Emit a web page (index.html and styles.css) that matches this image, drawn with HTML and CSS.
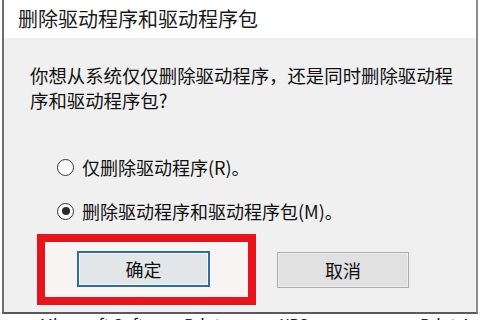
FILE: index.html
```html
<!DOCTYPE html>
<html lang="zh-CN">
<head>
    <meta charset="UTF-8" />
    <meta name="viewport" content="width=device-width, initial-scale=1.0" />
    <title>删除驱动程序和驱动程序包</title>
    <link rel="stylesheet" href="styles.css">
</head>
<body>
    <!-- Dialog -->
    <div class="dialog">
        <div class="dialog-title">删除驱动程序和驱动程序包</div>

        <div class="dialog-body">
            <p class="question">你想从系统仅仅删除驱动程序，还是同时删除驱动程序和驱动程序包?</p>

            <div class="options">
                <label class="option">
                    <span class="radio"></span>
                    <span>仅删除驱动程序(R)。</span>
                </label>
                <label class="option">
                    <span class="radio checked"></span>
                    <span>删除驱动程序和驱动程序包(M)。</span>
                </label>
            </div>

            <div class="buttons">
                <div class="highlight">
                    <button class="btn btn-default">确定</button>
                </div>
                <button class="btn">取消</button>
            </div>
        </div>
    </div>

    <!-- Window behind the dialog -->
    <div class="behind">
        <span class="col-name">Microsoft Software Printer Driver</span>
        <span class="col-type">XPS</span>
        <span class="col-env">Print 4</span>
    </div>
</body>
</html>
```

FILE: styles.css
```css
/* Base */
body {
    margin: 0;
    padding: 0;
    background: #fff;
    font-family: "Noto Sans CJK SC", "Noto Sans", sans-serif;
    color: #111;
    width: 480px;
    height: 320px;
    overflow: hidden;
}

/* Dialog frame */
.dialog {
    margin-left: 2px;
    width: 472px;
    border-left: 2px solid #6f6f6f;
    border-right: 2px solid #8c8c8c;
    border-bottom: 2px solid #5a5a5a;
    background: #f0f0f0;
}

.dialog-title {
    height: 38px;
    line-height: 38px;
    padding-left: 14px;
    background: #fff;
    font-size: 20px;
    color: #1a1a1a;
}

.dialog-body {
    padding: 25px 0 7px 26px;
    font-size: 18px;
}

.question {
    margin: 0;
    font-size: 18.4px;
    line-height: 25px;
    width: 432px;
}

/* Radio options */
.options {
    margin-top: 42px;
    display: flex;
    flex-direction: column;
    gap: 20px;
}

.option {
    display: flex;
    align-items: center;
    gap: 8px;
    height: 24px;
    padding-left: 27px;
}

.radio {
    width: 15px;
    height: 15px;
    border: 1px solid #333;
    border-radius: 50%;
    background: #fff;
    display: flex;
    justify-content: center;
    align-items: center;
}

.radio.checked::after {
    content: "";
    width: 8px;
    height: 8px;
    border-radius: 50%;
    background: #2b2b2b;
}

/* Buttons */
.buttons {
    margin-top: 11px;
    display: flex;
    align-items: center;
    gap: 21px;
}

.highlight {
    margin-left: 7px;
    border: 8px solid #e8141c;
    padding: 9px 38px 10px 32px;
    background: #f8f4f4;
}

.btn {
    width: 132px;
    height: 36px;
    font-family: inherit;
    font-size: 18px;
    color: #111;
    background: #e1e1e1;
    border: 1px solid #adadad;
    box-shadow: inset 0 0 0 1px #ececec;
    padding: 0;
}

.btn-default {
    width: 133px;
    border: 2px solid #2f6ea5;
    background: #e3e6e8;
    box-shadow: inset 0 0 0 1px #f4f6f8;
}

/* Window behind */
.behind {
    display: flex;
    padding-left: 40px;
    font-size: 16px;
    line-height: 16px;
    color: #222;
    margin-top: 2px;
}

.col-name {
    width: 240px;
}

.col-type {
    width: 140px;
}
```
